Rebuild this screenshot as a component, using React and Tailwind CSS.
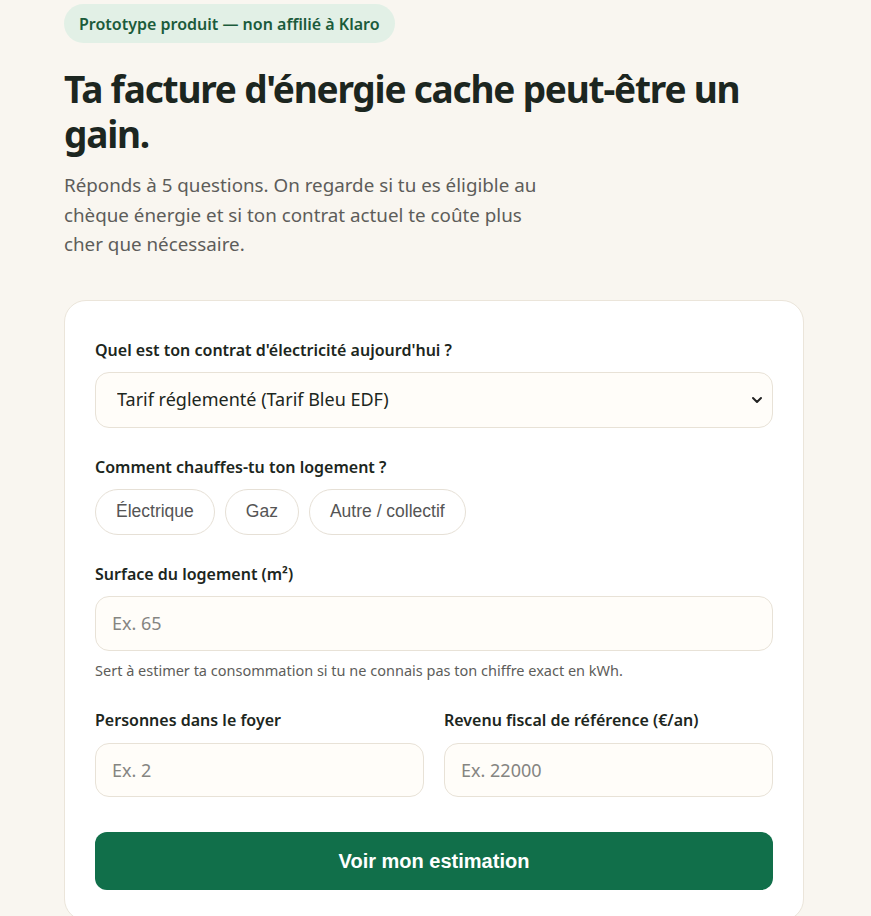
import { useState } from 'react';

const font = { fontFamily: '"Noto Sans", "Open Sans", sans-serif' };

export default function App() {
  const [heating, setHeating] = useState(null);

  return (
    <div className="min-h-[916px] bg-[#f9f6f0] text-[#1c2620]" style={font}>
      <div className="px-16">
        {/* ── Badge ─────────────────────────────────────────── */}
        <div className="pt-1">
          <span className="inline-flex h-[39px] items-center rounded-full bg-[#e2f0e6] px-[15px] text-[16px] font-semibold text-[#1b5b3b]">
            Prototype produit — non affilié à Klaro
          </span>
        </div>

        {/* ── Hero ──────────────────────────────────────────── */}
        <h1 className="mt-[23px] max-w-[700px] text-[37px] font-bold leading-[45px] tracking-[-1.2px] text-[#1c2620]">
          Ta facture d'énergie cache peut-être un gain.
        </h1>
        <p className="mt-[15px] max-w-[490px] text-[18.8px] leading-[29.5px] text-[#5d5d5a]">
          Réponds à 5 questions. On regarde si tu es éligible au chèque énergie et si ton contrat actuel te coûte plus cher que nécessaire.
        </p>

        {/* ── Form card ─────────────────────────────────────── */}
        <div className="mt-[40px] w-[740px] rounded-[22px] border border-[#ebe5da] bg-white px-[30px] pt-[37px] pb-[30px]">
          <label className="block text-[16px] font-semibold text-[#1c2620]">
            Quel est ton contrat d'électricité aujourd'hui ?
          </label>
          <div className="relative mt-[10px]">
            <select className="h-[56px] w-full appearance-none rounded-[14px] border border-[#e8e2d7] bg-[#fffdf9] pl-[21px] text-[18px] text-[#1c2620] outline-none">
              <option>Tarif réglementé (Tarif Bleu EDF)</option>
              <option>Offre de marché</option>
            </select>
            <svg className="pointer-events-none absolute right-[10px] top-[23px]" width="12" height="10" viewBox="0 0 12 10" fill="none">
              <path d="M2 3l4 4 4-4" stroke="#222" strokeWidth="2" strokeLinecap="round" strokeLinejoin="round" />
            </svg>
          </div>

          <label className="mt-[27px] block text-[16px] font-semibold text-[#1c2620]">
            Comment chauffes-tu ton logement ?
          </label>
          <div className="mt-[10px] flex gap-[10px]" style={{ fontFamily: '"Liberation Sans", Arial, sans-serif' }}>
            {['Électrique', 'Gaz', 'Autre / collectif'].map((opt) => (
              <button
                key={opt}
                onClick={() => setHeating(opt)}
                className={`h-[46px] rounded-full border px-[20px] text-[17.5px] ${
                  heating === opt
                    ? 'border-[#116f4a] bg-[#e2f0e6] text-[#116f4a]'
                    : 'border-[#e6e0d6] bg-white text-[#555]'
                }`}
              >
                {opt}
              </button>
            ))}
          </div>

          <label className="mt-[27px] block text-[16px] font-semibold text-[#1c2620]">
            Surface du logement (m²)
          </label>
          <input
            placeholder="Ex. 65"
            className="mt-[10px] h-[55px] w-full rounded-[14px] border border-[#e8e2d7] bg-[#fffdf9] px-[16px] text-[18px] outline-none placeholder:text-[#858582]"
          />
          <p className="mt-[9px] text-[14.5px] text-[#5d5d5a]">
            Sert à estimer ta consommation si tu ne connais pas ton chiffre exact en kWh.
          </p>

          <div className="mt-[27px] grid grid-cols-2 gap-[20px]">
            <div>
              <label className="block text-[16px] font-semibold text-[#1c2620]">
                Personnes dans le foyer
              </label>
              <input
                placeholder="Ex. 2"
                className="mt-[11px] h-[54px] w-full rounded-[14px] border border-[#e8e2d7] bg-[#fffdf9] px-[16px] text-[18px] outline-none placeholder:text-[#858582]"
              />
            </div>
            <div>
              <label className="block text-[16px] font-semibold text-[#1c2620]">
                Revenu fiscal de référence (€/an)
              </label>
              <input
                placeholder="Ex. 22000"
                className="mt-[11px] h-[54px] w-full rounded-[14px] border border-[#e8e2d7] bg-[#fffdf9] px-[16px] text-[18px] outline-none placeholder:text-[#858582]"
              />
            </div>
          </div>

          <button
            className="mt-[35px] h-[58px] w-full rounded-[12px] bg-[#116f4a] text-[20px] font-bold text-white"
            style={{ fontFamily: '"Liberation Sans", Arial, sans-serif' }}
          >
            Voir mon estimation
          </button>
        </div>
      </div>
    </div>
  );
}
